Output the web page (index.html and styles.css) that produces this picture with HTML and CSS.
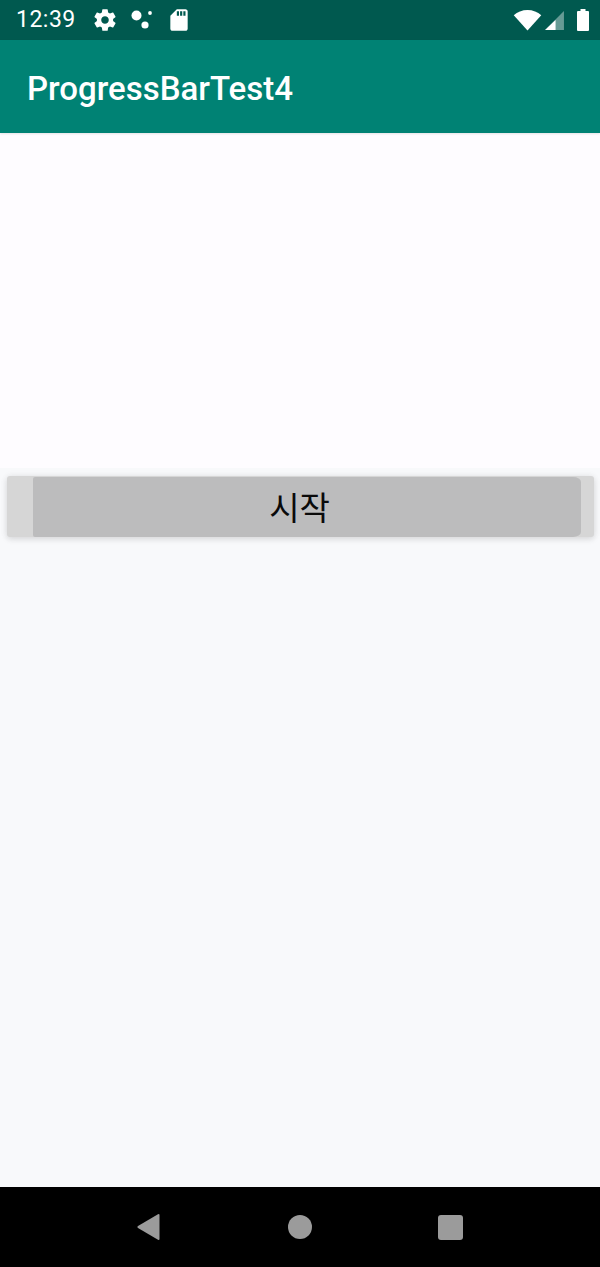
FILE: index.html
```html
<!DOCTYPE html>
<html lang="ko">
<head>
<meta charset="utf-8">
<title>ProgressBarTest4</title>
<link rel="stylesheet" href="styles.css">
</head>
<body>
<div class="screen">
  <header class="status">
    <span class="clock">12:39</span>
    <svg class="ic gear" viewBox="0 0 24 24"><path d="M19.43 12.98c.04-.32.07-.64.07-.98s-.03-.66-.07-.98l2.11-1.65c.19-.15.24-.42.12-.64l-2-3.46c-.12-.22-.39-.3-.61-.22l-2.49 1c-.52-.4-1.08-.73-1.69-.98l-.38-2.65C14.46 2.18 14.25 2 14 2h-4c-.25 0-.46.18-.49.42l-.38 2.65c-.61.25-1.17.59-1.69.98l-2.49-1c-.23-.09-.49 0-.61.22l-2 3.46c-.13.22-.07.49.12.64l2.11 1.65c-.04.32-.07.65-.07.98s.03.66.07.98l-2.11 1.65c-.19.15-.24.42-.12.64l2 3.46c.12.22.39.3.61.22l2.49-1c.52.4 1.08.73 1.69.98l.38 2.65c.03.24.24.42.49.42h4c.25 0 .46-.18.49-.42l.38-2.65c.61-.25 1.17-.59 1.69-.98l2.49 1c.23.09.49 0 .61-.22l2-3.46c.12-.22.07-.49-.12-.64l-2.11-1.65zM12 15.5c-1.93 0-3.5-1.57-3.5-3.5s1.57-3.5 3.5-3.5 3.5 1.57 3.5 3.5-1.57 3.5-3.5 3.5z"/></svg>
    <svg class="ic dots" viewBox="0 0 24 24"><circle cx="6.500" cy="7.500" r="5"/><circle cx="15" cy="17" r="3.600"/><circle cx="20" cy="5" r="1.900"/></svg>
    <svg class="ic sd" viewBox="0 0 24 24"><path d="M18 2h-8L4.020 8 4 20c0 1.100.9 2 2 2h12c1.100 0 2-.9 2-2V4c0-1.100-.9-2-2-2zm-6 6h-2V4h2v4zm3 0h-2V4h2v4zm3 0h-2V4h2v4z"/></svg>
    <span class="spacer"></span>
    <svg class="wifi" viewBox="0 0 26 20"><path d="M13 19.500 .5 5.600C3.800 2.600 8.200.8 13 .8s9.200 1.800 12.500 4.800z"/></svg>
    <svg class="signal" viewBox="0 0 20 20"><path class="sig-dim" d="M19 1v18H1z"/><path d="M11 9.500V19H1z"/></svg>
    <svg class="battery" viewBox="0 0 14 22"><path d="M4.500 0h5v2H12a1 1 0 0 1 1 1v18a1 1 0 0 1-1 1H2a1 1 0 0 1-1-1V3a1 1 0 0 1 1-1h2.500z"/></svg>
  </header>
  <div class="appbar"><h1 class="title">ProgressBarTest4</h1></div>
  <main class="content">
    <div class="top-fill"></div>
    <button class="start" type="button">
      <span class="start-progress"></span>
      <span class="start-label">시작</span>
    </button>
    <div class="bottom-fill"></div>
  </main>
  <nav class="navbar">
    <svg class="nav-ic" viewBox="0 0 26 28"><path d="M23.500 2v24a1 1 0 0 1-1.500.8L2 15a1.200 1.200 0 0 1 0-2L22 1.200a1 1 0 0 1 1.500.8z"/></svg>
    <span class="nav-circle"></span>
    <span class="nav-square"></span>
  </nav>
</div>
</body>
</html>
```
FILE: styles.css
```css
* { box-sizing: border-box; }
html, body { margin: 0; padding: 0; }
body { width: 600px; height: 1267px; overflow: hidden; font-family: Roboto, "Noto Sans CJK KR", sans-serif; }
.screen { width: 600px; height: 1267px; display: flex; flex-direction: column; background: #f8f9fb; }

.status { height: 40px; flex: none; background: #00594f; color: #fff; display: flex; align-items: center; padding: 0 10px 0 16px; }
.clock { font-size: 23px; letter-spacing: .5px; width: 62px; line-height: 40px; }
.ic { fill: #fff; flex: none; }
.gear { width: 26px; height: 26px; margin: 0 0 0 14px; }
.dots { width: 24px; height: 24px; margin: 0 0 0 12px; }
.sd { width: 26px; height: 26px; margin: 0 0 0 12px; }
.spacer { flex: 1; }
.wifi { width: 29px; height: 22px; fill: #fff; margin-right: 2px; }
.signal { width: 21px; height: 21px; fill: #fff; margin-right: 11px; }
.sig-dim { fill: #fff; fill-opacity: .4; }
.battery { width: 14px; height: 22px; fill: #fff; }

.appbar { height: 93px; flex: none; background: #008274; display: flex; align-items: center; padding: 3px 0 0 27px; position: relative; z-index: 1; box-shadow: 0 1px 2px rgba(0,0,0,.1); }
.title { margin: 0; color: #fff; font-size: 33px; font-weight: 500; line-height: 1; }

.content { flex: 1; display: flex; flex-direction: column; }
.top-fill { flex: none; height: 335px; background: #fefcff; }
.start { flex: none; margin: 8px 6px 0 7px; height: 61px; border: 0; padding: 0; border-radius: 3px; background: #d6d6d6; position: relative; display: block; box-shadow: 0 2px 6px rgba(0,0,0,.12), 0 0 8px rgba(0,0,0,.05); font-family: inherit; }
.start-progress { position: absolute; left: 26px; right: 13px; top: 1px; bottom: 0; background: #bcbcbd; border-radius: 2px 8px 8px 2px / 2px 5px 5px 2px; }
.start-label { position: relative; display: block; text-align: center; font-family: "Noto Sans CJK KR", sans-serif; font-size: 33px; line-height: 59px; color: #0a0a0a; transform: translateX(-1px); }
.bottom-fill { flex: 1; }

.navbar { height: 80px; flex: none; background: #000; position: relative; display: flex; align-items: center; }
.nav-ic { position: absolute; left: 136px; top: 26px; width: 26px; height: 28px; fill: #9b9b9b; }
.nav-circle { position: absolute; left: 288px; top: 28px; width: 24px; height: 24px; border-radius: 50%; background: #9b9b9b; }
.nav-square { position: absolute; left: 438px; top: 28px; width: 25px; height: 25px; border-radius: 3px; background: #9b9b9b; }
```
